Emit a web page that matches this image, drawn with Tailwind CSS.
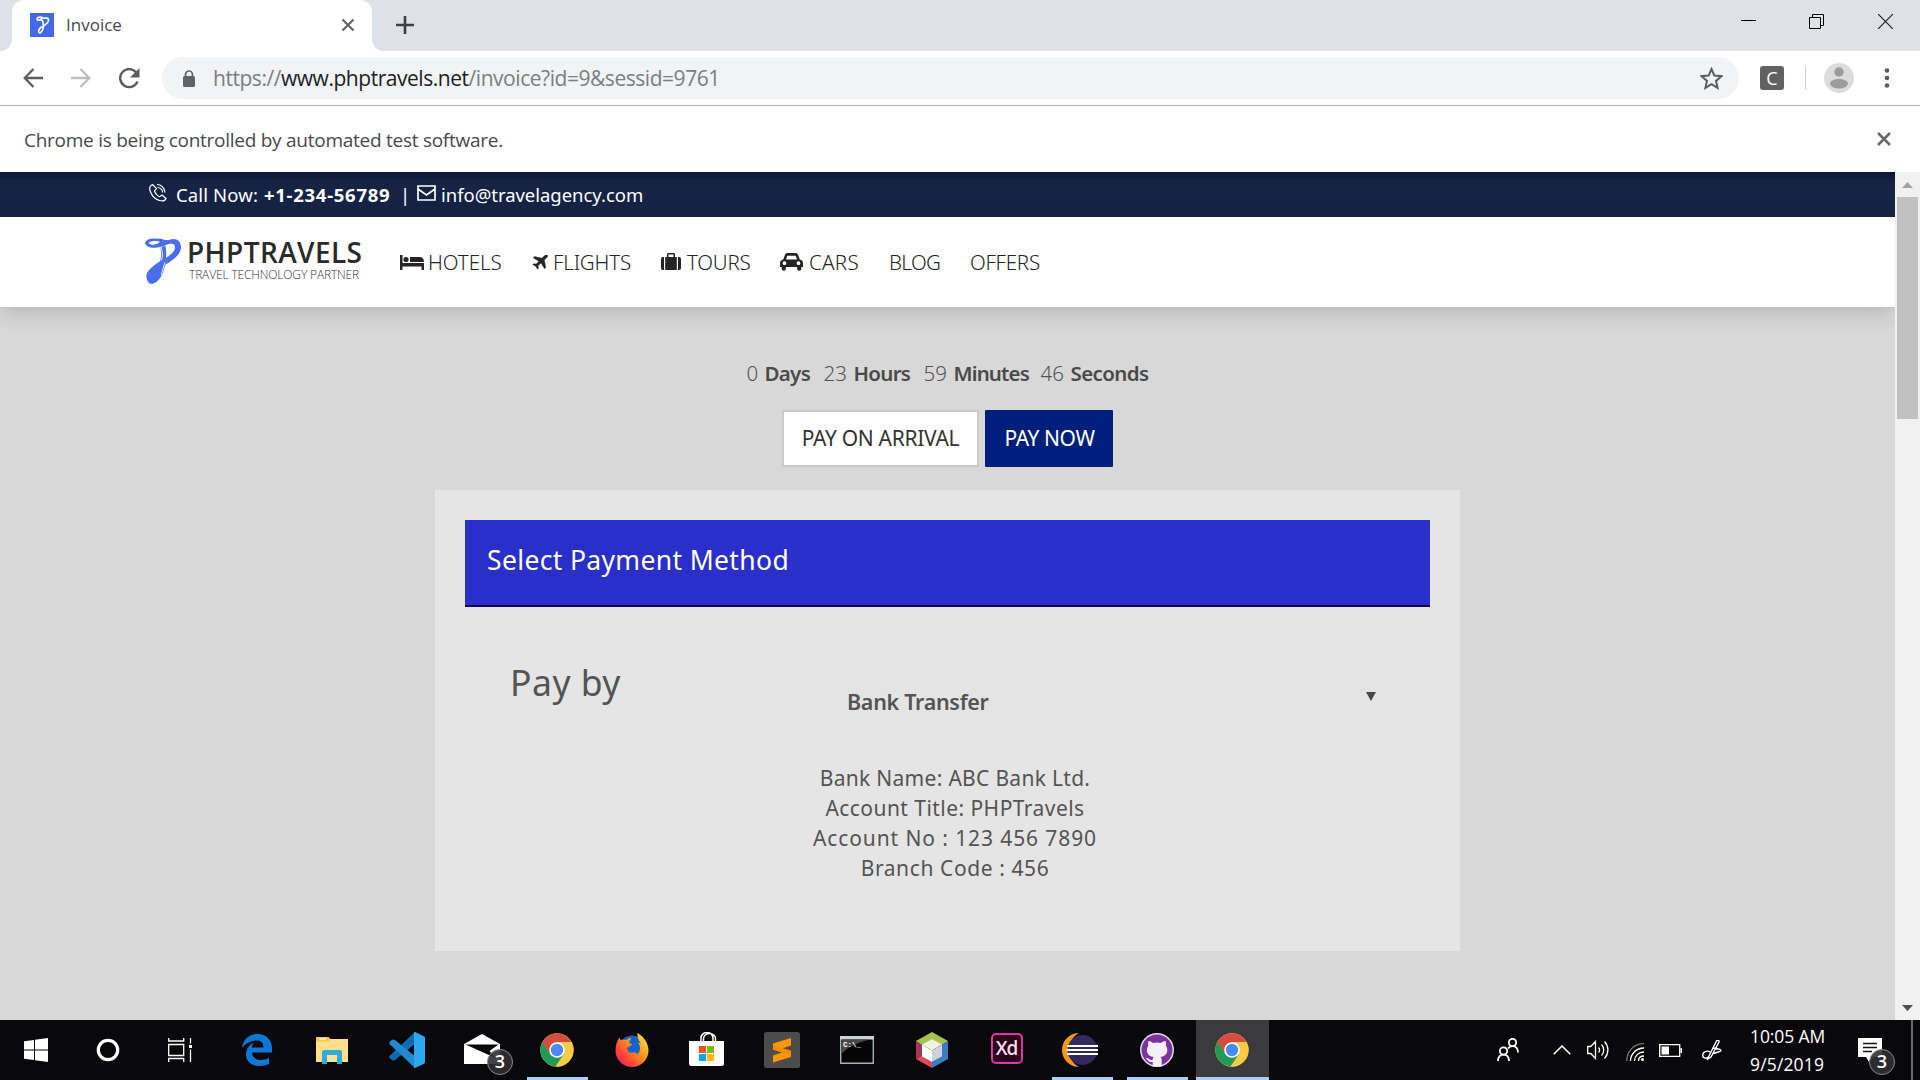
<!DOCTYPE html>
<html lang="en">
<head>
<meta charset="utf-8">
<title>Invoice</title>
<script src="https://cdn.jsdelivr.net/npm/@tailwindcss/browser@4"></script>
</head>
<body class="w-[1920px] h-[1080px] overflow-hidden flex flex-col bg-[#d8d8d8] font-['Open_Sans',sans-serif] whitespace-nowrap">

<!-- Tab strip -->
<div class="h-[51px] shrink-0 bg-[#dee1e6] flex items-start">
  <div class="relative ml-3 w-[360px] h-[51px] bg-white rounded-t-[12px] flex items-center pl-[18px]">
    <svg class="absolute -left-3 bottom-0 w-3 h-3" viewBox="0 0 12 12"><path d="M12 0A12 12 0 0 1 0 12h12z" fill="#fff"/></svg>
    <svg class="absolute -right-3 bottom-0 w-3 h-3" viewBox="0 0 12 12"><path d="M0 0a12 12 0 0 0 12 12H0z" fill="#fff"/></svg>
    <svg class="w-6 h-6 shrink-0 -mt-px" viewBox="0 0 24 24"><path d="M0 0h24v24H0z" fill="#4368e8"/><path d="M7 6.500c0-3 4-2.500 6-1.500s5-1.500 5.500 1.500-3 5.500-6 7-5 4.500-3.500 6 4.500-2.500 4.500-6.500-1-6-3-6.500M7 6.500c1 1.500 4 .5 5-1" fill="none" stroke="#fff" stroke-width="1.700"/></svg>
    <span class="ml-3 w-[56px] text-[17px] text-[#45484c] -mt-px">Invoice</span>
    <svg class="ml-[219px] h-[14px] w-[14px] shrink-0 -mt-px" viewBox="0 0 14 14"><path d="M1.500 1.500l11 11M12.500 1.500l-11 11" stroke="#5f6368" stroke-width="2.200"/></svg>
  </div>
  <svg class="ml-[24px] mt-[16px] w-[18px] h-[18px]" viewBox="0 0 18 18"><path d="M9 0v18M0 9h18" stroke="#3c4043" stroke-width="2.600"/></svg>
  <svg class="ml-[1327px] mt-[14px] w-[15px] h-[15px]" viewBox="0 0 15 15"><path d="M0 6.500h15" stroke="#000"/></svg>
  <svg class="ml-[53px] mt-[14px] w-[15px] h-[15px]" viewBox="0 0 15 15" fill="none" stroke="#000"><path d="M.5 3.500h11v11H.5zM3.500 3.500v-3h11v11h-3"/></svg>
  <svg class="ml-[54px] mt-[14px] w-[15px] h-[15px]" viewBox="0 0 15 15"><path d="M0 0l15 15M15 0L0 15" stroke="#222" stroke-width="1.200"/></svg>
</div>

<!-- Toolbar -->
<div class="h-[55px] shrink-0 bg-white border-b border-[#b4b5b7] flex items-center">
  <svg class="ml-[23px] w-[20px] h-[20px]" viewBox="0 0 20 20" fill="none" stroke="#5a5d61" stroke-width="2.300"><path d="M20 10H2M10.500 1L1.700 10l8.800 9"/></svg>
  <svg class="ml-[28px] w-[20px] h-[20px]" viewBox="0 0 20 20" fill="none" stroke="#bcbec0" stroke-width="2.300"><path d="M0 10h18M9.500 1l8.800 9-8.800 9"/></svg>
  <svg class="ml-[28px] w-[21px] h-[21px]" viewBox="0 0 21 21" fill="none" stroke="#5a5d61" stroke-width="2.400"><path d="M18.500 13.500A9 9 0 1 1 17 4.200"/><path d="M20.500 0v9.500H11z" fill="#5a5d61" stroke="none"/></svg>
  <div class="ml-[22px] w-[1577px] h-[42px] rounded-full bg-[#f1f3f4] flex items-center">
    <svg class="ml-[20px] w-[14px] h-[17px]" viewBox="0 0 14 17"><path d="M3.500 7V4.500a3.500 3.500 0 0 1 7 0V7" fill="none" stroke="#5f6368" stroke-width="1.700"/><rect x="1" y="6" width="12" height="11" rx="1.500" fill="#5f6368"/></svg>
    <span class="ml-[17px] w-[508px] text-[21px] tracking-[-0.460px] text-[#7b7f83] pt-px">https://<span class="text-[#202124]">www.phptravels.net</span>/invoice?id=9&amp;sessid=9761</span>
    <svg class="ml-[979px] w-[23px] h-[23px]" viewBox="0 0 23 23"><path d="M11.500 2l2.800 6.600 7.100.6-5.400 4.700 1.600 7-6.100-3.700-6.100 3.700 1.600-7L1.600 9.200l7.100-.6z" fill="none" stroke="#5a5d61" stroke-width="2"/></svg>
  </div>
  <div class="ml-[21px] w-6 h-6 rounded-[3px] bg-[#626262] text-white text-[18px] leading-6 text-center">C</div>
  <div class="ml-[21px] w-px h-6 bg-[#ccc]"></div>
  <svg class="ml-[18px] w-[30px] h-[30px]" viewBox="0 0 30 30"><circle cx="15" cy="15" r="15" fill="#dcdcdc"/><circle cx="15" cy="9" r="4.700" fill="#9c9c9c"/><path d="M6 20.500c0-3 5-4.500 9-4.500s9 1.500 9 4.500-5 5-9 5-9-2-9-5z" fill="#9c9c9c"/></svg>
  <svg class="ml-[30px] w-[6px] h-[20px]" viewBox="0 0 6 20" fill="#5a5d61"><circle cx="3" cy="2.500" r="2.300"/><circle cx="3" cy="10" r="2.300"/><circle cx="3" cy="17.500" r="2.300"/></svg>
</div>

<!-- Info bar -->
<div class="h-[66px] shrink-0 bg-white flex items-center justify-between pl-6 pr-[29px] pt-[2px]">
  <span class="text-[19px] tracking-[-0.260px] text-[#47494d]">Chrome is being controlled by automated test software.</span>
  <svg class="w-[14px] h-[14px] mb-[2px]" viewBox="0 0 14 14"><path d="M1 1l12 12M13 1L1 13" stroke="#67696d" stroke-width="2.600"/></svg>
</div>

<!-- Page viewport -->
<div class="flex h-[848px] shrink-0">
  <div class="w-[1895px] h-full flex flex-col font-['Noto_Sans',sans-serif]">
    <div class="h-[45px] shrink-0 bg-linear-to-b from-[#0e1631] to-[#172344] to-20% text-white flex items-center text-[18.500px] leading-6 pb-[3px]">
      <svg class="ml-[148px] mb-[2px] w-[19px] h-[19px]" viewBox="0 0 19 19" fill="none" stroke="#fff" stroke-width="1.200"><path d="M4.500 1.500C2 2.500.8 5 2.500 9s5 7.500 9 8.500 6-.5 6.500-2l-4-3.500-2.500 1.700C9.500 13 7 10 6.500 8l2-2.500zM9 1.500c4 0 7.500 3 8 8M9.500 4.500c2.500 0 5 2 5.200 5"/></svg>
      <span class="ml-[9px] w-[88px] pt-[4px] tracking-[0.130px]">Call Now:</span>
      <span class="w-[126px] font-bold pt-[4px] tracking-[0.720px]">+1-234-56789</span>
      <span class="ml-[10px] w-[17px] pt-[4px]">|</span>
      <svg class="w-[19px] h-[16px]" viewBox="0 0 19 16" fill="none" stroke="#fff" stroke-width="1.700"><path d="M1 1h17v14H1zM1 4l8.500 6L18 4"/></svg>
      <span class="ml-[5px] pt-[4px] tracking-[-0.030px]">info@travelagency.com</span>
    </div>
    <div class="h-[90px] shrink-0 bg-white flex items-center text-[20.500px] text-[#242424] font-light shadow-[0_4px_22px_rgba(0,0,0,0.18)]">
      <div class="ml-[145px] w-[255px] flex items-center">
        <svg class="w-[36px] h-[46px] -mt-[2px]" viewBox="0 0 36 46"><path d="M0 5C1 1 6 0 12 .5c6 .3 8 2 12 1.500C31-1 36 3 36 9c0 8-8 13-16 18C12 32 4 36 5 41c1 3.500-1 4-2.500 2C-1 36 4 31 11 26c9-6 19-10 19-17 0-4-4-4-9-2C15 10 2 12 0 5z" fill="#4b6ef0"/><path d="M3.500 5C6 2.500 12 2.500 15 4 11 7 6 8 3.500 5z" fill="#fff"/><path d="M15.500 9.500l5-2c1.500 9 .5 20-3 28C14.500 43 9 47 4.500 45.500c-3-2 0-8 3.500-12 6-6 9.500-11 7.500-24z" fill="#4b6ef0"/><path d="M16 9c1.700 5 1.800 9 .5 13.500M20 24.500c-2 4-1.500 7-4 12" fill="none" stroke="#fff" stroke-width=".9"/></svg>
        <div class="ml-[7px] flex flex-col font-['Open_Sans',sans-serif] text-[#2a2a2a]">
          <span class="text-[28px] leading-[32px] font-semibold w-[176px] tracking-[0.400px] -ml-px -mt-[6px]">PHPTRAVELS</span>
          <span class="text-[12px] leading-[14px] text-[#333] w-[175px] tracking-[-0.150px] ml-px font-light">TRAVEL TECHNOLOGY PARTNER</span>
        </div>
      </div>
      <svg class="w-[24px] h-[15px]" viewBox="0 0 24 15" fill="#242424"><path d="M0 0h2.500v8H24v7h-2.500v-3.500h-19V15H0z"/><circle cx="6" cy="4.500" r="2.600"/><path d="M10 2h9.500c3 0 4.500 2 4.500 5H10z"/></svg>
      <span class="ml-[4px] w-[104px] tracking-[-0.050px]">HOTELS</span>
      <svg class="w-[16px] h-[15px]" viewBox="0 0 16 15" fill="#242424"><path d="M15.700.3c-.9-.7-2.400-.2-3.500.8L10 3.200 2.500 1.600 1.300 2.800l5.600 3.500-2.600 2.800-2.600-.4-.9.900 3 1.600 1.700 3 .9-.9-.4-2.600 3-2.600 3.600 5.600 1.200-1.200-1.600-7.500 2.200-2.100c1-1 1.600-2 .9-2.600z" stroke="#242424" stroke-width=".5"/></svg>
      <span class="ml-[5px] w-[108px] tracking-[-0.150px]">FLIGHTS</span>
      <svg class="w-[20px] h-[18px]" viewBox="0 0 20 18" fill="#242424"><path d="M3 4v13H2a2 2 0 0 1-2-2V6a2 2 0 0 1 2-2zM17 4v13h1a2 2 0 0 0 2-2V6a2 2 0 0 0-2-2zM4.200 4H6V1.500C6 .6 6.700 0 7.500 0h5c.8 0 1.500.6 1.500 1.500V4h1.800v13H4.200zM7.500 4h5V1.500h-5z" fill-rule="evenodd"/></svg>
      <span class="ml-[6px] w-[93px] tracking-[-0.200px]">TOURS</span>
      <svg class="w-[23px] h-[18px]" viewBox="0 0 23 18" fill="#242424"><path d="M3.200 6.500L5 1.800C5.500.6 6.500 0 7.600 0h7.800c1.100 0 2.100.6 2.600 1.800l1.800 4.700c2 .3 3.200 1.600 3.200 3.500V14h-1.700v1.700a2.100 2.100 0 0 1-4.200 0V14H5.900v1.700a2.100 2.100 0 0 1-4.200 0V14H0v-4c0-1.900 1.200-3.200 3.200-3.500zm2.800 0h11l-1.300-3.700H7.300zM4.500 8.300a1.900 1.900 0 1 0 0 3.800 1.900 1.900 0 0 0 0-3.800zm14 0a1.900 1.900 0 1 0 0 3.800 1.900 1.900 0 0 0 0-3.800z" fill-rule="evenodd"/></svg>
      <span class="ml-[6px] w-[80px] tracking-[0.300px]">CARS</span>
      <span class="w-[81px] tracking-[-0.600px]">BLOG</span>
      <span class="tracking-[-0.250px]">OFFERS</span>
    </div>

    <!-- Booking countdown -->
    <div class="flex flex-col items-center text-[#545454] text-[21px]">
      <div class="mt-[51px] h-[30px] w-[402px] flex items-center font-light text-[20.500px]">
        <span class="w-[18px]">0</span><b class="w-[59px] font-semibold text-[#4a4a4a] tracking-[-0.700px]">Days</b>
        <span class="w-[30px]">23</span><b class="w-[70px] font-semibold text-[#4a4a4a] tracking-[-0.700px]">Hours</b>
        <span class="w-[30px]">59</span><b class="w-[87px] font-semibold text-[#4a4a4a] tracking-[-0.850px]">Minutes</b>
        <span class="w-[30px]">46</span><b class="font-semibold text-[#4a4a4a] tracking-[-0.600px]">Seconds</b>
      </div>
      <div class="mt-[22px] flex gap-[6px] h-[57px] text-[21px]">
        <div class="w-[197px] border-2 border-[#c9c9c9] bg-white text-[#333] flex items-center justify-center tracking-[-0.300px]">PAY ON ARRIVAL</div>
        <div class="w-[128px] bg-[#001f7c] text-white flex items-center justify-center rounded-[1px] tracking-[-0.400px] pl-px">PAY NOW</div>
      </div>
      <!-- Payment card -->
      <div class="mt-[23px] w-[1025px] h-[461px] bg-[#e5e5e5] p-[30px]">
        <div class="h-[87px] bg-[#2a2fca] border-b-2 border-[#16005c] pl-[22px] text-white text-[26.500px] leading-[80px] tracking-[0.350px]">Select Payment Method</div>
        <div class="flex pl-[45px] mt-[44px]">
          <div class="w-[317px] text-[35.500px] leading-[63px] tracking-[0.500px]">Pay by</div>
          <div class="w-[558px] h-[90px] bg-[#e4e4e4] pl-[20px] pr-[9px] flex justify-between text-[21.500px] font-semibold">
            <span class="leading-[101px] tracking-[-0.300px]">Bank Transfer</span>
            <svg class="mt-[41px] w-[10px] h-[9px]" viewBox="0 0 10 9"><path d="M0 0h10L5 9z" fill="#484848"/></svg>
          </div>
        </div>
        <div class="mt-[22px] pl-[15px] text-center leading-[30px] text-[21px]">
          <div class="tracking-[0.300px]">Bank Name: ABC Bank Ltd.</div>
          <div class="tracking-[0.450px]">Account Title: PHPTravels</div>
          <div class="tracking-[0.900px]">Account No : 123 456 7890</div>
          <div class="tracking-[0.600px]">Branch Code : 456</div>
        </div>
      </div>
    </div>
  </div>
  <!-- Scrollbar -->
  <div class="w-[25px] h-full bg-[#f1f1f1] flex flex-col items-center pt-[10px] pb-[9px]">
    <svg class="w-[11px] h-[6px]" viewBox="0 0 11 6"><path d="M5.500 0L11 6H0z" fill="#a3a3a3"/></svg>
    <div class="mt-[9px] w-[21px] h-[222px] bg-[#c1c1c1]"></div>
    <svg class="mt-auto w-[11px] h-[6px]" viewBox="0 0 11 6"><path d="M0 0h11L5.500 6z" fill="#505050"/></svg>
  </div>
</div>

<!-- Taskbar -->
<div class="h-[60px] shrink-0 bg-[#09090c] flex text-white">
  <div class="w-[72px] flex items-center justify-center"><svg class="w-6 h-6" viewBox="0 0 24 24" fill="#fff"><path d="M0 3.300L10 2v9.500H0zM11 1.800L24 0v11.500H11zM0 12.500h10V22L0 20.700zM11 12.500h13V24l-13-1.800z"/></svg></div>
  <div class="w-[72px] flex items-center justify-center"><svg class="w-6 h-6" viewBox="0 0 24 24"><circle cx="12" cy="12" r="9.700" fill="none" stroke="#fff" stroke-width="3.200"/></svg></div>
  <div class="w-[75px] pr-[3px] flex items-center justify-center"><svg class="w-6 h-6" viewBox="0 0 24 24" fill="none" stroke="#fff" stroke-width="1.300"><path d="M.7 0v3h15V0M.7 6.500h15v11H.7zM.7 24v-3.500h15V24M22.500 0v5.500M22.500 11.500V24"/><path d="M21 7h3v3h-3z" fill="#fff" stroke="none"/></svg></div>
  <div class="w-[75px] flex items-center justify-center"><svg class="w-[30px] h-[32px]" viewBox="0 0 30 32"><path d="M0 14C1 5 8 0 15.500 0 24 0 30 6 30 14v4.500H10c.3 5 4 7.500 9 7.500 3 0 5.500-.8 8-2.200V30c-2.500 1.300-6 2-9.500 2C8.500 32 4 26.500 4 20.500 4 15 7 11 12 8.500 10.500 10 10 11.500 10 13.500h11.500c0-4.500-2.500-7-6.500-7C9 6.500 3.500 9.500 0 14z" fill="#0a78d6"/></svg></div>
  <div class="w-[75px] flex items-center justify-center"><svg class="w-[32px] h-[27px]" viewBox="0 0 32 27"><path d="M0 1a1 1 0 0 1 1-1h11l2.500 2H32v23H0z" fill="#ffe08a"/><path d="M0 1a1 1 0 0 1 1-1h11l2.500 2-2 2.500H0z" fill="#f9c63f"/><path d="M3 2h7" stroke="#fff" stroke-width="1.200"/><path d="M6 27V15a2 2 0 0 1 2-2h16a2 2 0 0 1 2 2v12h-5v-9H11v9z" fill="#34a9dc"/></svg></div>
  <div class="w-[75px] flex items-center justify-center"><svg class="w-[36px] h-[36px]" viewBox="0 0 36 36"><path d="M26 0L1 23.500c-1 1-1 2 0 3L3 28c.8.7 2 .7 3 0L27 11z" fill="#0d6cb0"/><path d="M26 36L1 12.500c-1-1-1-2 0-3L3 8c.8-.7 2-.7 3 0l21 17z" fill="#2289ce"/><path d="M26 0l8.500 4c1 .5 1.500 1.200 1.500 2.200v23.600c0 1-.5 1.700-1.500 2.200L26 36c-.8.200-1 0-1-.5V.5c0-.5.300-.7 1-.5z" fill="#2aa8f2"/></svg></div>
  <div class="relative w-[75px] flex items-center justify-center"><svg class="w-[36px] h-[30px] mb-[3px]" viewBox="0 0 36 30"><path d="M0 10L18 0l18 10v20H0z" fill="#fff"/><path d="M1.500 10.500h33L25.500 17l6 7z" fill="#09090c"/></svg>
    <div class="absolute left-[43px] top-[29px] w-[26px] h-[26px] rounded-full bg-[#303033]/90 border-[1.500px] border-[#8a8a8a] text-[18px] leading-[22px] text-center font-semibold">3</div></div>
  <div class="relative w-[75px] flex items-center justify-center"><svg class="w-[34px] h-[34px]" viewBox="0 0 34 34"><circle cx="17" cy="17" r="16.700" fill="#fbcb43"/><path d="M2.500 8.700A16.700 16.700 0 0 1 31.500 9H17l-7.500 12z" fill="#d64c40"/><path d="M2.500 8.700A16.700 16.700 0 0 0 15.500 33.600L24 21l-14 0z" fill="#229a57"/><path d="M31.700 9.500H17l7 11.500-8 12.600A16.700 16.700 0 0 0 31.700 9.500z" fill="#fbcb43"/><circle cx="17" cy="17" r="7.800" fill="#fff"/><circle cx="17" cy="17" r="6.200" fill="#4a8af4"/></svg><div class="absolute bottom-0 left-[8px] w-[61px] h-[3px] bg-[#a9cdf5]"></div></div>
  <div class="w-[75px] flex items-center justify-center"><svg class="w-[34px] h-[34px]" viewBox="0 0 34 34"><defs><linearGradient id="ff" x1="1" y1="0" x2="0" y2="1"><stop offset="0" stop-color="#fff044"/><stop offset=".4" stop-color="#ff9a1a"/><stop offset=".75" stop-color="#ff3b3b"/><stop offset="1" stop-color="#e8169a"/></linearGradient></defs><circle cx="17" cy="15" r="12.500" fill="#1265c8"/><path d="M22.500 0c5 3 11 9 11 17.500a16.500 16.500 0 0 1-33 0C.500 12 2 8 4.500 4.500L5.500 7c2-1 4-.5 6 0 2-2 3.500-2 4.500-2l-2 4.500 3 2c-1 2-4 1.500-5 4 1 4 4 5 6 4 2-.5 4 .5 3 2 5-1.500 5-8 2-12l3 1c-3-4-4-7-3.500-10.500z" fill="url(#ff)"/></svg></div>
  <div class="w-[75px] flex items-center justify-center"><svg class="w-[35px] h-[34px] mb-[2px]" viewBox="0 0 35 34"><path d="M12 10V6a6 5.500 0 0 1 12 0v4M14.500 10V6.500a6 5 0 0 1 12 0V10" fill="none" stroke="#fff" stroke-width="1.500"/><path d="M0 9h35v22.500a2.500 2.500 0 0 1-2.500 2.500h-30A2.500 2.500 0 0 1 0 31.500z" fill="#fff"/><path d="M10 14h7v7h-7z" fill="#f25022"/><path d="M18 14h7v7h-7z" fill="#7fba00"/><path d="M10 22h7v7h-7z" fill="#00a4ef"/><path d="M18 22h7v7h-7z" fill="#ffb900"/></svg></div>
  <div class="w-[75px] flex items-center justify-center"><svg class="w-[36px] h-[36px]" viewBox="0 0 36 36"><rect width="36" height="36" rx="2.500" fill="#4c4c4c"/><path d="M27 6v7.500L18 16.500l9 3V25L9 30.500v-7l9-3L9 17.500V11.500z" fill="#ff9800"/><path d="M9 17.500v-4l18 5v5l-9-3z" fill="#f58d08"/></svg></div>
  <div class="w-[75px] flex items-center justify-center"><svg class="w-[34px] h-[28px] mb-px" viewBox="0 0 34 28"><path d="M.7.7h32.600v26.600H.7z" fill="#050505" stroke="#a9b0b5" stroke-width="1.400"/><path d="M0 0h34v3.500H0z" fill="#d0d3d5"/><path d="M1.500 3.500H30C20 6 8 10 1.500 18z" fill="#4a4a4a"/><text x="3" y="11" font-size="7.500" font-weight="700" fill="#fff" font-family="Liberation Mono">C:\_</text></svg></div>
  <div class="w-[75px] flex items-center justify-center"><svg class="w-[32px] h-[36px]" viewBox="0 0 32 36"><path d="M0 9L16 0l16 9-6 4-10-5.500L6 13z" fill="#a6c24f"/><path d="M0 9l6 4v11.500L0 27z" fill="#a83355"/><path d="M0 27l6-3 10 6v6z" fill="#dc4a5e"/><path d="M32 9l-6 4v11.500L16 30v6l16-9z" fill="#3b7dc4"/><path d="M6 12.500L16 7l10 5.500L16 18.500z" fill="#eff5dd"/><path d="M6 12.500l10 6V30L6 24.500z" fill="#fff"/><path d="M26 12.500l-10 6V30l10-5.500z" fill="#ccd3df"/></svg></div>
  <div class="w-[75px] flex items-center justify-center"><div class="mb-[4px] w-[32px] h-[31px] rounded-[5px] border-2 border-[#d63aa5] bg-[#2d0019] text-[19px] leading-[26px] text-center font-semibold text-[#fbdcf3] tracking-[-1px]">Xd</div></div>
  <div class="relative w-[75px] flex items-center justify-center"><svg class="w-[36px] h-[34px] mr-[3px]" viewBox="0 0 36 34"><path d="M17 0A17 17 0 0 0 17 34C11 31 7 24 7 17S11 3 17 0z" fill="#f7981d"/><circle cx="20.500" cy="17" r="15" fill="#312a5e"/><path d="M5 13h31M4.500 17H36M5 21h31" stroke="#fff" stroke-width="2"/></svg><div class="absolute bottom-0 left-[8px] w-[61px] h-[3px] bg-[#a9cdf5]"></div></div>
  <div class="relative w-[75px] flex items-center justify-center"><svg class="w-[34px] h-[34px]" viewBox="0 0 34 34"><circle cx="17" cy="17" r="16.200" fill="#7a359c" stroke="#e6d8ee" stroke-width="1.500"/><path d="M8.500 8c2 0 4 1.500 4.500 2 2.500-.7 5.500-.7 8 0 .5-.5 2.500-2 4.500-2 .8 2 .5 4 .3 4.500 3 4 1.700 11-5.300 11.500 1 1 1.200 2 1.200 4v5.500h-9V29c-4 .7-5-2-7-4 3-.5 3.500 2.500 7 2 0-1.500.3-2.500 1-3-7-.5-8.300-7.500-5.300-11.500-.2-.5-.7-2.500.1-4.500z" fill="#f4f0f6"/></svg><div class="absolute bottom-0 left-[8px] w-[61px] h-[3px] bg-[#a9cdf5]"></div></div>
  <div class="relative ml-[2px] w-[73px] bg-[#3b3b3d] flex items-center justify-center pr-[2px]"><svg class="w-[34px] h-[34px]" viewBox="0 0 34 34"><circle cx="17" cy="17" r="16.700" fill="#fbcb43"/><path d="M2.500 8.700A16.700 16.700 0 0 1 31.500 9H17l-7.500 12z" fill="#d64c40"/><path d="M2.500 8.700A16.700 16.700 0 0 0 15.500 33.600L24 21l-14 0z" fill="#229a57"/><path d="M31.700 9.500H17l7 11.500-8 12.600A16.700 16.700 0 0 0 31.700 9.500z" fill="#fbcb43"/><circle cx="17" cy="17" r="7.800" fill="#fff"/><circle cx="17" cy="17" r="6.200" fill="#4a8af4"/></svg><div class="absolute bottom-0 left-0 w-full h-[3px] bg-[#a9cdf5]"></div></div>

  <!-- System tray -->
  <div class="ml-[228px] flex items-center">
    <svg class="w-[22px] h-[24px]" viewBox="0 0 22 24" fill="none" stroke="#fff" stroke-width="1.800"><circle cx="15.500" cy="4.500" r="3.700"/><circle cx="6.500" cy="13" r="3.700"/><path d="M.9 23c.3-4 2.500-6.300 5.600-6.300s5.300 2.300 5.600 6.300M11 10.500c1-1.500 2.500-2.300 4.500-2.300 3.300 0 5.300 2.300 5.600 6.300"/></svg>
    <svg class="ml-[34px] w-[18px] h-[10px] -mt-px" viewBox="0 0 18 10"><path d="M.7 9.300L9 1l8.300 8.300" fill="none" stroke="#fff" stroke-width="1.500"/></svg>
    <svg class="ml-[16px] w-[22px] h-[20px]" viewBox="0 0 22 20" fill="none" stroke="#fff" stroke-width="1.300"><path d="M.7 6.500h3L8.500 1.500v17l-4.800-5h-3zM11.500 7.500c1.300 1.500 1.300 3.500 0 5M14.500 4.500c3 3 3 8 0 11M17.500 1.500c4.500 5 4.500 12 0 17"/></svg>
    <svg class="ml-[17px] w-[18px] h-[18px] mt-[3px]" viewBox="0 0 18 18" fill="none" stroke="#fff" stroke-width="1.300"><path d="M.7 18C.7 8 8 .7 18 .7" stroke="#777"/><path d="M4.500 18C4.500 10.500 10.500 5 18 5"/><path d="M8.500 18c0-5 4-9 9.500-9"/><path d="M12.500 18c0-3 2-5 5.500-5"/><circle cx="16.500" cy="16.500" r="1.500" fill="#fff" stroke="none"/></svg>
    <svg class="ml-[15px] w-[23px] h-[13px]" viewBox="0 0 23 13"><path d="M.7.7h20v11.600H.7zM22.300 4v5" fill="none" stroke="#fff" stroke-width="1.300"/><path d="M2.500 2.500H10v8H2.500z" fill="#fff"/></svg>
    <svg class="ml-[20px] w-[20px] h-[20px]" viewBox="0 0 20 20" fill="none" stroke="#fff" stroke-width="1.400"><path d="M6 18L14.500 1c1-1.500 3-.5 2.500 1L9 17l-3.500 2.300zM8 12c-3-2-7.500 0-7.300 3.500.2 3 4 3.500 6.300 1M10.500 8l6 1c3 .5 3 2 1 2.500l-6 2"/></svg>
    <div class="ml-[28px] w-[76px] flex flex-col text-[17.500px] leading-[28px]">
      <span class="tracking-[-0.100px]">10:05 AM</span><span class="tracking-[0.150px]">9/5/2019</span>
    </div>
    <div class="relative ml-[32px] w-6 h-6"><svg class="w-6 h-6" viewBox="0 0 24 24"><path d="M0 0h24v19H15l-4 5-3-5H0z" fill="#fff"/><path d="M5 5.500h14M5 9.500h14M5 13.500h9" stroke="#111" stroke-width="1.300"/></svg>
      <div class="absolute left-[11px] top-[11px] w-[26px] h-[26px] rounded-full bg-[#303033]/90 border-[1.500px] border-[#8a8a8a] text-[18px] leading-[22px] text-center font-semibold">3</div></div>
    <div class="ml-[29px] w-[2px] h-[60px] bg-[#6a6a6c]"></div>
  </div>
</div>
</body>
</html>
